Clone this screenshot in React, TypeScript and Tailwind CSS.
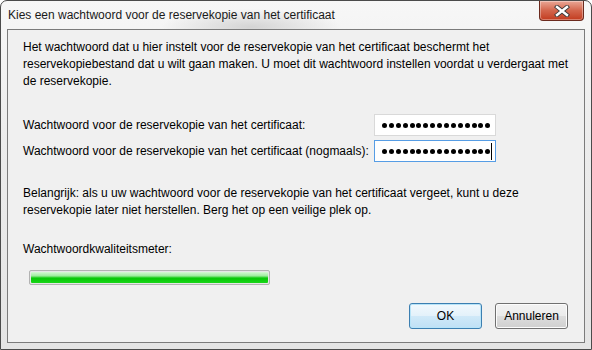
import React from "react"

const font = { fontFamily: '"Liberation Sans", Arial, sans-serif' }

function Dots({ count }: { count: number }) {
  return (
    <div className="flex items-center gap-[1.9px]">
      {Array.from({ length: count }).map((_, i) => (
        <span key={i} className="block w-[5px] h-[5px] rounded-full bg-black" />
      ))}
    </div>
  )
}

function CloseButton() {
  return (
    <div className="w-[45px] h-[20px] rounded-b-[4px] border border-t-0 border-[#6b2a1e] bg-gradient-to-b from-[#e9a796] via-[#d3654c] to-[#c23a1c] flex items-center justify-center shadow-[inset_0_0_0_1px_rgba(255,255,255,0.35)]">
      <svg width="16" height="12" viewBox="0 0 16 12">
        <path d="M3 2 L13 10 M13 2 L3 10" stroke="#3a3a3a" strokeWidth="4.2" strokeLinecap="square" />
        <path d="M3 2 L13 10 M13 2 L3 10" stroke="#ffffff" strokeWidth="2.4" strokeLinecap="square" />
      </svg>
    </div>
  )
}

function Button({ label, focused }: { label: string; focused?: boolean }) {
  return (
    <div
      className={`w-[73px] h-[26px] rounded-[3px] border flex items-center justify-center text-[12px] text-black ${
        focused
          ? "border-[#3c7fb1] bg-[linear-gradient(to_bottom,#f2f9fd_0%,#e3f1fa_50%,#d0e9f8_51%,#bfe0f5_100%)] shadow-[inset_0_0_0_1px_#b8e4f8]"
          : "border-[#707070] bg-[linear-gradient(to_bottom,#f2f2f2_0%,#ebebeb_50%,#dddddd_51%,#cfcfcf_100%)] shadow-[inset_0_0_0_1px_#fcfcfc]"
      }`}
    >
      {label}
    </div>
  )
}

export default function App() {
  return (
    <div
      className="w-[592px] h-[350px] bg-white text-black text-[12px] leading-[17px]"
      style={font}
    >
      <div className="w-full h-full rounded-t-[7px] border border-[#4b4b4b] bg-[radial-gradient(ellipse_90px_18px_at_250px_26px,#d4d4d4,transparent),linear-gradient(to_bottom,#f7f7f7_0%,#ececec_40%,#e4e4e4_100%)] flex flex-col">
        {/* Title bar */}
        <div className="h-[28px] flex items-start justify-between shrink-0">
          <div className="pl-[7px] pt-[6px] text-[12px] text-[#1a1a1a]">
            Kies een wachtwoord voor de reservekopie van het certificaat
          </div>
          <div className="pr-[7px]">
            <CloseButton />
          </div>
        </div>

        {/* Client area */}
        <div className="mx-[6px] border border-[#7b7b7b] bg-[#f0f0f0] h-[314px] flex flex-col px-[15px] pt-[9px] text-[#000]">
          <p>
            Het wachtwoord dat u hier instelt voor de reservekopie van het certificaat beschermt het
            <br />
            reservekopiebestand dat u wilt gaan maken. U moet dit wachtwoord instellen voordat u verdergaat met
            <br />
            de reservekopie.
          </p>

          <div className="mt-[24px] flex flex-col gap-[4px]">
            <div className="flex items-center justify-between h-[22px]">
              <span>Wachtwoord voor de reservekopie van het certificaat:</span>
              <div className="w-[122px] h-[22px] mr-[73px] border border-[#d9d9d9] bg-white flex items-center pl-[7px]">
                <Dots count={16} />
              </div>
            </div>
            <div className="flex items-center justify-between h-[22px]">
              <span>Wachtwoord voor de reservekopie van het certificaat (nogmaals):</span>
              <div className="w-[122px] h-[22px] mr-[73px] border border-[#569de5] bg-white flex items-center pl-[7px]">
                <Dots count={16} />
                <span className="block w-px h-[17px] bg-black ml-[1px]" />
              </div>
            </div>
          </div>

          <p className="mt-[23px]">
            Belangrijk: als u uw wachtwoord voor de reservekopie van het certificaat vergeet, kunt u deze
            <br />
            reservekopie later niet herstellen. Berg het op een veilige plek op.
          </p>

          <p className="mt-[22px]">Wachtwoordkwaliteitsmeter:</p>

          <div className="mt-[12px] ml-[6px] w-[241px] h-[15px] rounded-[2px] border border-[#b2b2b2] bg-[#e6e6e6] p-px">
            <div className="w-full h-full rounded-[1px] bg-[linear-gradient(to_bottom,#d6f8d6_0%,#9eec9e_35%,#2fd12f_50%,#06c806_60%,#1ad61a_100%)]" />
          </div>

          <div className="mt-[18px] flex justify-end gap-[13px] pr-[1px]">
            <Button label="OK" focused />
            <Button label="Annuleren" />
          </div>
        </div>
      </div>
    </div>
  )
}
